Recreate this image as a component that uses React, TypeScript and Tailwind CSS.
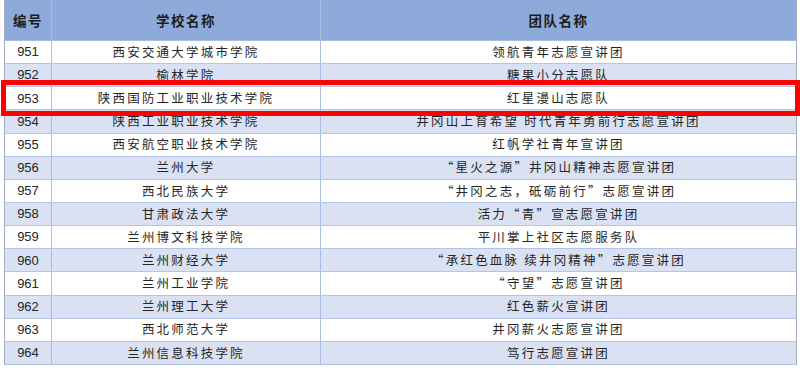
// 志愿服务团队名单表格（截图复刻）
const rows = [
  { no: "951", school: "西安交通大学城市学院", team: "领航青年志愿宣讲团" },
  { no: "952", school: "榆林学院", team: "糖果小分志愿队" },
  { no: "953", school: "陕西国防工业职业技术学院", team: "红星漫山志愿队" },
  { no: "954", school: "陕西工业职业技术学院", team: "井冈山上育希望 时代青年勇前行志愿宣讲团" },
  { no: "955", school: "西安航空职业技术学院", team: "红帆学社青年宣讲团" },
  { no: "956", school: "兰州大学", team: "“星火之源”井冈山精神志愿宣讲团" },
  { no: "957", school: "西北民族大学", team: "“井冈之志，砥砺前行”志愿宣讲团" },
  { no: "958", school: "甘肃政法大学", team: "活力“青”宣志愿宣讲团" },
  { no: "959", school: "兰州博文科技学院", team: "平川掌上社区志愿服务队" },
  { no: "960", school: "兰州财经大学", team: "“承红色血脉 续井冈精神”志愿宣讲团" },
  { no: "961", school: "兰州工业学院", team: "“守望”志愿宣讲团" },
  { no: "962", school: "兰州理工大学", team: "红色薪火宣讲团" },
  { no: "963", school: "西北师范大学", team: "井冈薪火志愿宣讲团" },
  { no: "964", school: "兰州信息科技学院", team: "笃行志愿宣讲团" },
];

const cjk = "font-['Noto_Sans_CJK_SC',sans-serif]";

export default function App() {
  return (
    <div className="relative w-[800px] h-[370px] overflow-hidden bg-white">
      <div className="ml-[4px] w-[793px] border-x border-[#a3adc2]">
        {/* 表头 */}
        <div className={`grid grid-cols-[47px_269px_1fr] h-[41px] bg-[#8eaadb] border-b border-[#a9bde3] text-[#1d1d1d] font-bold text-[13.5px] ${cjk}`}>
          <div className="flex items-center justify-center border-r border-[#a9bde3] tracking-[1.5px]">编号</div>
          <div className="flex items-center justify-center border-r border-[#a9bde3] tracking-[1.5px]">学校名称</div>
          <div className="flex items-center justify-center tracking-[1.5px]">团队名称</div>
        </div>

        {/* 数据行 */}
        {rows.map((r, i) => (
          <div
            key={r.no}
            className={`grid grid-cols-[47px_269px_1fr] h-[23.15px] border-b border-[#b3c5e8] text-[#262626] ${i % 2 === 1 ? "bg-[#d9e1f2]" : "bg-white"}`}
          >
            <div className="flex items-center justify-center border-r border-[#a9bde3] font-['Liberation_Sans',sans-serif] text-[13px]">
              {r.no}
            </div>
            <div className={`flex items-center justify-center border-r border-[#a9bde3] text-[12.5px] tracking-[2.2px] ${cjk}`}>
              {r.school}
            </div>
            <div className={`flex items-center justify-center text-[12.5px] tracking-[2.2px] whitespace-nowrap ${cjk}`}>
              {r.team}
            </div>
          </div>
        ))}
      </div>

      {/* 红色标注框 */}
      <div className="absolute left-[1px] top-[80px] w-[799px] h-[36px] border-[5px] border-[#ff0000]" />
    </div>
  );
}
